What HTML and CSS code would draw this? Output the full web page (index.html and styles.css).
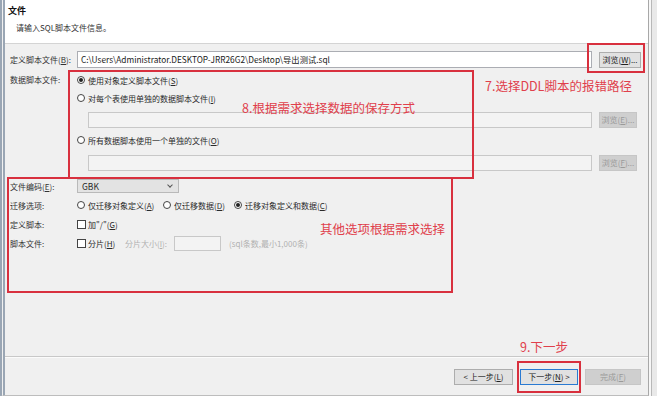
FILE: index.html
```html
<!DOCTYPE html>
<html lang="zh-CN">
<head>
    <meta charset="UTF-8">
    <title>导出SQL脚本文件</title>
    <link rel="stylesheet" href="styles.css">
</head>
<body>
    <div class="screen">
        <div class="window">
            <header class="head">
                <div class="head-title">文件</div>
                <div class="head-sub">请输入SQL脚本文件信息。</div>
            </header>

            <main class="form">
                <div class="row row-file">
                    <span class="lbl">定义脚本文件(<u>B</u>):</span>
                    <div class="field">
                        <div class="input">C:\Users\Administrator.DESKTOP-JRR26G2\Desktop\导出测试.sql</div>
                        <button class="btn btn-browse">浏览(<u>W</u>)...</button>
                    </div>
                </div>

                <div class="row row-data">
                    <span class="lbl lbl-top">数据脚本文件:</span>
                    <div class="data-col">
                        <div class="opt"><span class="radio checked"></span>使用对象定义脚本文件(<u>S</u>)</div>
                        <div class="opt opt-2"><span class="radio"></span>对每个表使用单独的数据脚本文件(<u>I</u>)</div>
                        <div class="sub-field">
                            <div class="input input-off"></div>
                            <button class="btn btn-off">浏览(<u>E</u>)...</button>
                        </div>
                        <div class="opt opt-3"><span class="radio"></span>所有数据脚本使用一个单独的文件(<u>O</u>)</div>
                        <div class="sub-field sub-field-last">
                            <div class="input input-off"></div>
                            <button class="btn btn-off">浏览(<u>F</u>)...</button>
                        </div>
                    </div>
                </div>

                <div class="row row-enc">
                    <span class="lbl">文件编码(<u>E</u>):</span>
                    <div class="select">GBK<span class="caret"></span></div>
                </div>

                <div class="row row-opt">
                    <span class="lbl">迁移选项:</span>
                    <div class="opt opt-a"><span class="radio"></span>仅迁移对象定义(<u>A</u>)</div>
                    <div class="opt opt-d"><span class="radio"></span>仅迁移数据(<u>D</u>)</div>
                    <div class="opt"><span class="radio checked"></span>迁移对象定义和数据(<u>C</u>)</div>
                </div>

                <div class="row row-opt">
                    <span class="lbl">定义脚本:</span>
                    <div class="opt"><span class="check"></span>加"/"(<u>G</u>)</div>
                </div>

                <div class="row row-split">
                    <span class="lbl">脚本文件:</span>
                    <div class="opt opt-split"><span class="check"></span>分片(<u>H</u>)</div>
                    <span class="muted">分片大小(<u>I</u>):</span>
                    <div class="input input-off input-small"></div>
                    <span class="muted">(sql条数,最小1,000条)</span>
                </div>
            </main>

            <footer class="foot">
                <button class="btn btn-back">&lt; 上一步(<u>L</u>)</button>
                <button class="btn btn-next">下一步(<u>N</u>) &gt;</button>
                <button class="btn btn-off btn-finish">完成(<u>F</u>)</button>
            </footer>
        </div>
        <div class="side"></div>

        <div class="mark mark-browse"></div>
        <div class="mark mark-data"></div>
        <div class="mark mark-other"></div>
        <div class="mark mark-next"></div>

        <div class="note note-7">7.选择DDL脚本的报错路径</div>
        <div class="note note-8">8.根据需求选择数据的保存方式</div>
        <div class="note note-other">其他选项根据需求选择</div>
        <div class="note note-9">9.下一步</div>
    </div>
</body>
</html>
```

FILE: styles.css
```css
* {
    box-sizing: border-box;
}
body {
    margin: 0;
    padding: 0;
    background-color: #f0f0f0;
    font-family: "Noto Sans CJK SC", "Liberation Sans", sans-serif;
    font-size: 8px;
    color: #2a2a2a;
}
u {
    text-decoration: underline;
    text-underline-offset: 1px;
}
.screen {
    position: relative;
    width: 657px;
    height: 396px;
    display: flex;
    overflow: hidden;
}
.window {
    flex: 1;
    display: flex;
    flex-direction: column;
    border-left: 5px double #9aa6b4;
    border-right: 1px solid #a8a8a8;
    border-bottom: 1px solid #bdbdbd;
    background-color: #f0f0f0;
}
.side {
    width: 8px;
    background-color: #e9e9e9;
    border-left: 2px solid #f7f7f7;
    box-shadow: inset 1px 0 0 #b8b8b8;
}

/* header */
.head {
    height: 44px;
    background-color: #fff;
    border-bottom: 1px solid #d4d4d4;
    padding: 6px 0 0 3px;
}
.head-title {
    font-weight: bold;
    font-size: 9px;
    line-height: 10px;
    color: #111;
}
.head-sub {
    margin: 7px 0 0 8px;
    line-height: 10px;
    color: #333;
}

/* form */
.form {
    flex: 1;
    padding: 7px 7px 0 5px;
}
.row {
    display: flex;
    align-items: center;
}
.lbl {
    width: 67px;
    flex-shrink: 0;
    color: #333;
}
.lbl-top {
    align-self: flex-start;
    line-height: 14px;
}
.field {
    flex: 1;
    display: flex;
    align-items: center;
    gap: 7px;
}
.row-file {
    height: 17px;
}
.input {
    flex: 1;
    height: 17px;
    padding: 0 3px;
    line-height: 15px;
    background-color: #fff;
    border: 1px solid #abadb3;
    white-space: nowrap;
    overflow: hidden;
    font-size: 8.3px;
    color: #1a1a1a;
}
.input-off {
    height: 16px;
    background-color: #f3f3f3;
    border-color: #c8c8c8;
}
.btn {
    height: 16px;
    padding: 0;
    font-family: inherit;
    font-size: 8px;
    line-height: 14px;
    color: #222;
    background-color: #e1e1e1;
    border: 1px solid #adadad;
}
.btn-browse {
    width: 42px;
}
.btn-off {
    width: 38px;
    color: #9a9a9a;
    background-color: #cfcfcf;
    border-color: #c6c6c6;
}

.row-data {
    margin-top: 5px;
    align-items: flex-start;
}
.data-col {
    flex: 1;
    padding-right: 4px;
}
.opt {
    display: flex;
    align-items: center;
    height: 14px;
    white-space: nowrap;
}
.opt-2 {
    margin-top: 4px;
}
.opt-3 {
    margin-top: 5px;
}
.sub-field {
    display: flex;
    align-items: center;
    gap: 7px;
    margin: 7px 0 0 11px;
}
.sub-field-last {
    margin-top: 8px;
}
.radio {
    width: 8px;
    height: 8px;
    margin-right: 3px;
    border: 1px solid #444;
    border-radius: 50%;
    background-color: #fff;
    position: relative;
}
.radio.checked::after {
    content: "";
    position: absolute;
    left: 1px;
    top: 1px;
    width: 4px;
    height: 4px;
    border-radius: 50%;
    background-color: #222;
}
.check {
    width: 9px;
    height: 9px;
    margin-right: 2px;
    border: 1px solid #444;
    background-color: #fff;
}

.row-enc {
    margin-top: 8px;
    height: 14px;
}
.select {
    position: relative;
    width: 102px;
    height: 14px;
    padding-left: 4px;
    line-height: 13px;
    font-size: 8.5px;
    background-color: #e3e3e3;
    border: 1px solid #b9b9b9;
}
.caret {
    position: absolute;
    right: 6px;
    top: 3px;
    width: 4px;
    height: 4px;
    border-right: 1px solid #555;
    border-bottom: 1px solid #555;
    transform: rotate(45deg);
}
.row-opt {
    margin-top: 5px;
    height: 14px;
}
.opt-a {
    width: 86px;
}
.opt-d {
    width: 71px;
}
.row-split {
    margin-top: 5px;
    height: 15px;
}
.opt-split {
    width: 48px;
}
.muted {
    color: #b0b0b0;
    white-space: nowrap;
}
.input-small {
    flex: none;
    width: 47px;
    height: 15px;
    margin: 0 8px 0 7px;
}

/* footer */
.foot {
    height: 39px;
    border-top: 1px solid #c8c8c8;
    box-shadow: inset 0 1px 0 #fbfbfb;
    display: flex;
    justify-content: flex-end;
    align-items: flex-start;
    gap: 7px;
    padding: 12px 7px 0 0;
}
.btn-back {
    width: 59px;
}
.btn-next {
    width: 58px;
    border-color: #2a7ad2;
}
.btn-finish {
    width: 56px;
}

/* annotations drawn over the screenshot */
.mark {
    position: absolute;
    border: 2px solid #d8303e;
}
.mark-browse {
    left: 587px;
    top: 43px;
    width: 58px;
    height: 30px;
}
.mark-data {
    left: 68px;
    top: 70px;
    width: 406px;
    height: 109px;
}
.mark-other {
    left: 7px;
    top: 177px;
    width: 446px;
    height: 116px;
}
.mark-next {
    left: 517px;
    top: 361px;
    width: 64px;
    height: 32px;
}
.note {
    position: absolute;
    font-size: 12.5px;
    line-height: 14px;
    color: #e0404c;
    white-space: nowrap;
}
.note-7 {
    left: 485px;
    top: 79px;
}
.note-8 {
    left: 242px;
    top: 101px;
}
.note-other {
    left: 320px;
    top: 222px;
}
.note-9 {
    left: 520px;
    top: 340px;
}
```
